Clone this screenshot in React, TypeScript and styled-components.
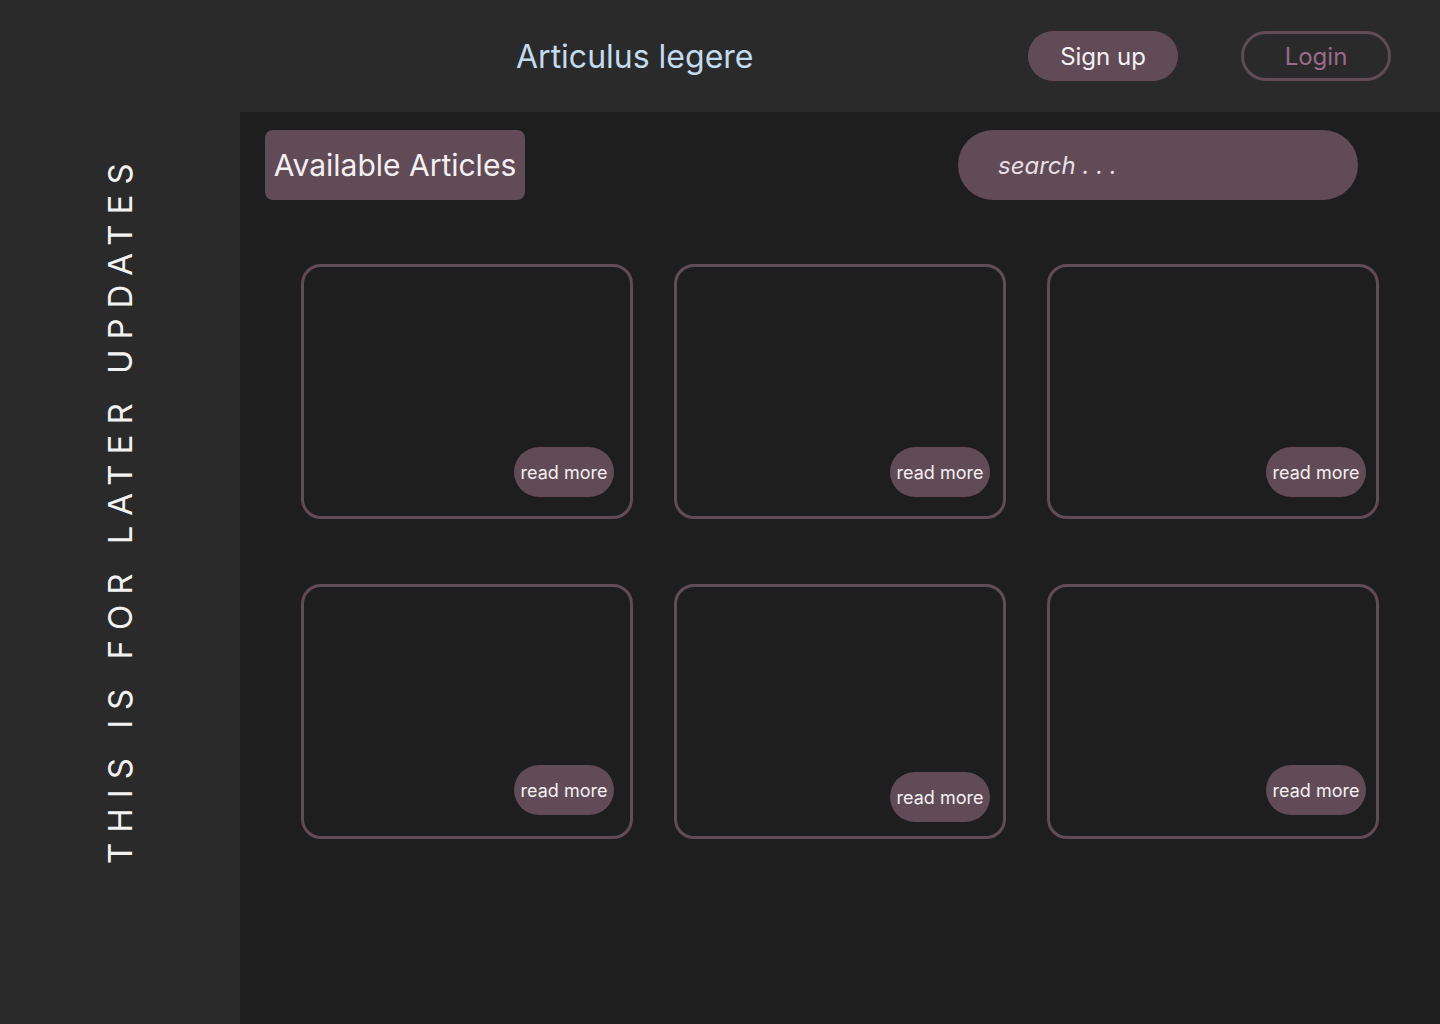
import React from "react";
import styled, { createGlobalStyle } from "styled-components";

const GlobalStyle = createGlobalStyle`
  html, body {
    margin: 0;
    padding: 0;
    background: #1e1e1e;
    font-family: Inter, "Noto Sans", sans-serif;
  }
  * {
    box-sizing: border-box;
  }
`;

const Page = styled.div`
  display: grid;
  grid-template-columns: 240px minmax(0, 1fr);
  grid-template-rows: 112px 1fr;
  width: 1440px;
  height: 1024px;
  background: #1e1e1e;
  overflow: hidden;
`;

const Header = styled.header`
  grid-column: 1 / 3;
  display: flex;
  align-items: center;
  padding: 0 49px 0 516px;
  background: #2a2a2a;
`;

const Title = styled.h1`
  flex: 1;
  margin: 0;
  font-size: 32px;
  font-weight: 400;
  color: #c3dbef;
`;

const NavButtons = styled.div`
  display: flex;
  gap: 63px;
`;

const NavButton = styled.button<{ $outline?: boolean }>`
  width: 150px;
  height: 50px;
  border-radius: 25px;
  font-family: inherit;
  font-size: 24px;
  cursor: pointer;
  background: ${(p) => (p.$outline ? "transparent" : "#614b57")};
  border: ${(p) => (p.$outline ? "3px solid #614b57" : "none")};
  color: ${(p) => (p.$outline ? "#9a6a89" : "#f4f0f2")};
`;

const Sidebar = styled.aside`
  display: flex;
  justify-content: center;
  padding-top: 46px;
  background: #2a2a2a;
`;

const SideText = styled.div`
  writing-mode: vertical-rl;
  transform: rotate(180deg);
  height: 706px;
  font-size: 33px;
  letter-spacing: 10px;
  color: #f2f2f2;
  white-space: nowrap;
  text-align: right;
`;

const Main = styled.main`
  padding: 18px 0 0 25px;
`;

const Toolbar = styled.div`
  display: flex;
  justify-content: space-between;
  align-items: center;
  padding-right: 82px;
`;

const SectionLabel = styled.div`
  display: flex;
  align-items: center;
  justify-content: center;
  width: 260px;
  height: 70px;
  border-radius: 8px;
  background: #614b57;
  color: #f4f0f2;
  font-size: 30px;
`;

const Search = styled.input`
  width: 400px;
  height: 70px;
  border: none;
  border-radius: 35px;
  background: #614b57;
  padding: 0 40px;
  font-family: inherit;
  font-size: 24px;
  font-style: italic;
  color: #f4f0f2;
  outline: none;

  &::placeholder {
    color: #e6dfe3;
    font-style: italic;
  }
`;

const CardGrid = styled.div`
  display: grid;
  grid-template-columns: repeat(3, 332px);
  grid-auto-rows: 255px;
  column-gap: 41px;
  row-gap: 65px;
  margin: 64px 0 0 36px;
`;

const Card = styled.div<{ $right: number; $bottom: number }>`
  display: flex;
  justify-content: flex-end;
  align-items: flex-end;
  padding: 0 ${(p) => p.$right}px ${(p) => p.$bottom}px 0;
  border: 3px solid #614b57;
  border-radius: 20px;
`;

const ReadMore = styled.button`
  width: 100px;
  height: 50px;
  border: none;
  border-radius: 25px;
  background: #614b57;
  color: #f4f0f2;
  font-family: inherit;
  font-size: 18px;
  padding: 0;
  cursor: pointer;
`;

const cards = [
  { id: 1, right: 16, bottom: 19 },
  { id: 2, right: 13, bottom: 19 },
  { id: 3, right: 10, bottom: 19 },
  { id: 4, right: 16, bottom: 21 },
  { id: 5, right: 13, bottom: 14 },
  { id: 6, right: 10, bottom: 21 },
];

function App() {
  return (
    <>
      <GlobalStyle />
      <Page>
        <Header>
          <Title>Articulus legere</Title>
          <NavButtons>
            <NavButton>Sign up</NavButton>
            <NavButton $outline>Login</NavButton>
          </NavButtons>
        </Header>

        <Sidebar>
          <SideText>THIS IS FOR LATER UPDATES</SideText>
        </Sidebar>

        <Main>
          <Toolbar>
            <SectionLabel>Available Articles</SectionLabel>
            <Search placeholder="search . . ." />
          </Toolbar>

          <CardGrid>
            {cards.map((c) => (
              <Card key={c.id} $right={c.right} $bottom={c.bottom}>
                <ReadMore>read more</ReadMore>
              </Card>
            ))}
          </CardGrid>
        </Main>
      </Page>
    </>
  );
}

export default App;
